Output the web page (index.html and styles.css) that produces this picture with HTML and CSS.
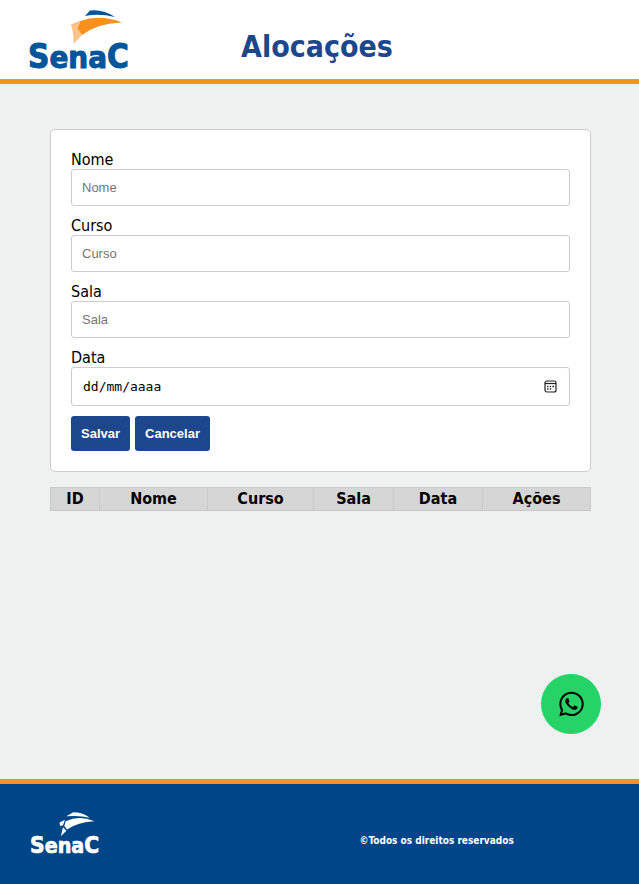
FILE: index.html
```html
<!DOCTYPE html>
<html lang="pt-BR">
<head>
<meta charset="utf-8">
<meta name="viewport" content="width=device-width, initial-scale=1">
<title>Alocações</title>
<link rel="stylesheet" href="styles.css">
</head>
<body>
<header class="header">
  <a class="brand" href="#" aria-label="Senac">
    <svg class="logo" viewBox="0 0 102 62">
      <path class="logo-top" d="M57 7 62 1.500Q75 0 87 8Q71 4 57 7Z"/>
      <path class="logo-wing" d="M52.500 12Q72 5 94 13.500Q70 14 54 26L49 19.500Z"/>
      <path class="logo-fold" d="M43 15.500 52.500 11.500 49.500 19.500 54 26 45.500 35Q46 25 43 15.500Z"/>
      <text class="logo-text" x="0" y="59"><tspan class="cap">S</tspan><tspan>ena</tspan><tspan class="cap">C</tspan></text>
    </svg>
  </a>
  <h1 class="title">Alocações</h1>
</header>
<main class="main">
  <form class="card">
    <label for="nome">Nome</label>
    <input class="field" id="nome" type="text" placeholder="Nome">
    <label for="curso">Curso</label>
    <input class="field" id="curso" type="text" placeholder="Curso">
    <label for="sala">Sala</label>
    <input class="field" id="sala" type="text" placeholder="Sala">
    <label for="data">Data</label>
    <div class="field date">
      <input class="date-input" id="data" type="text" inputmode="numeric" placeholder="dd/mm/aaaa">
      <button class="picker" type="button" aria-label="Abrir calendário">
        <svg viewBox="0 0 13 13"><rect x="1" y="1" width="11" height="11" rx="2" fill="none" stroke="#222" stroke-width="1.2"/><path d="M1 3.500H12" stroke="#222" stroke-width="1.2"/><path d="M3.200 6.500h1.300M5.800 6.500h1.300M8.400 6.500h1.600M3.200 9h1.300M5.800 9h1.300" stroke="#222" stroke-width="1.4"/></svg>
      </button>
    </div>
    <div class="actions">
      <button class="btn" type="button">Salvar</button>
      <button class="btn" type="button">Cancelar</button>
    </div>
  </form>
  <table class="table">
    <colgroup><col class="c-id"><col class="c-nome"><col class="c-curso"><col class="c-sala"><col class="c-data"><col class="c-acoes"></colgroup>
    <thead><tr><th>ID</th><th>Nome</th><th>Curso</th><th>Sala</th><th>Data</th><th>Ações</th></tr></thead>
  </table>
</main>
<footer class="footer">
  <a class="brand" href="#" aria-label="Senac">
    <svg class="logo logo-light" viewBox="0 0 102 62">
      <path class="logo-top" d="M53 6 63 0Q76 0 87 8Q71 4 53 6Z"/>
      <path class="logo-wing" d="M52 13Q72 4 94 13Q70 14 54 25L50 20Z"/>
      <path class="logo-fold" d="M43 15 51 11 48 19 44 20ZM48 22 53 27 45 35Z"/>
      <text class="logo-text" x="0" y="59"><tspan class="cap">S</tspan><tspan>ena</tspan><tspan class="cap">C</tspan></text>
    </svg>
  </a>
  <p class="rights">©Todos os direitos reservados</p>
</footer>
<a class="whatsapp" href="#" aria-label="WhatsApp">
  <svg viewBox="0 0 448 512"><path d="M380.9 97.1C339 55.1 283.2 32 223.9 32c-122.4 0-222 99.6-222 222 0 39.1 10.2 77.3 29.6 111L0 480l117.7-30.9c32.4 17.7 68.9 27 106.1 27h.1c122.3 0 224.1-99.6 224.1-222 0-59.3-25.2-115-67.1-157zm-157 341.600c-33.200 0-65.700-8.900-94-25.700l-6.700-4-69.800 18.300L72 359.200l-4.400-7c-18.500-29.400-28.200-63.300-28.200-98.200 0-101.700 82.800-184.500 184.600-184.500 49.300 0 95.600 19.200 130.400 54.100 34.800 34.900 56.200 81.200 56.100 130.500 0 101.800-84.900 184.600-186.600 184.600zm101.200-138.200c-5.500-2.800-32.800-16.200-37.900-18-5.100-1.900-8.800-2.800-12.500 2.800-3.700 5.600-14.300 18-17.600 21.800-3.200 3.700-6.500 4.200-12 1.400-32.600-16.300-54-29.100-75.500-66-5.700-9.800 5.700-9.100 16.300-30.300 1.800-3.700.9-6.900-.5-9.700-1.400-2.800-12.500-30.100-17.100-41.200-4.500-10.800-9.100-9.300-12.500-9.500-3.200-.2-6.900-.2-10.600-.2-3.700 0-9.700 1.400-14.800 6.900-5.100 5.600-19.400 19-19.400 46.300 0 27.300 19.900 53.700 22.600 57.400 2.800 3.700 39.100 59.700 94.800 83.800 35.200 15.200 49 16.500 66.600 13.900 10.700-1.600 32.800-13.400 37.400-26.400 4.600-13 4.600-24.100 3.200-26.400-1.300-2.500-5-3.900-10.500-6.600z"/></svg>
</a>
</body>
</html>
```

FILE: styles.css
```css
* { box-sizing: border-box; }
body {
  margin: 0;
  min-height: 100vh;
  display: flex;
  flex-direction: column;
  background: #eff1f1;
  color: #000;
  font: 16px/20px Tahoma, "DejaVu Sans Condensed", "Noto Sans", sans-serif;
}
.header {
  display: flex;
  align-items: center;
  padding: 9px 28px 8px;
  background: #fff;
  border-bottom: 5px solid #f7941d;
}
.brand { display: block; }
.logo { display: block; width: 102px; height: 62px; overflow: visible; }
.logo-top { fill: #00559b; }
.logo-wing { fill: #f7901e; }
.logo-fold { fill: #fbc38a; }
.logo-text {
  font: bold 31px "DejaVu Sans Condensed", "DejaVu Sans", sans-serif;
  fill: #00559b;
  stroke: #00559b;
  stroke-width: 1px;
}
.logo-text .cap { font-size: 33px; }
.title {
  margin: 14px 0 0 111px;
  color: #1c478c;
  font-size: 30px;
  line-height: 36px;
}
.main { flex: 1; padding: 45px 48px 45px 50px; }
.card {
  padding: 20px;
  background: #fff;
  border: 1px solid #ccc;
  border-radius: 5px;
}
.card label { display: block; height: 19px; line-height: 20px; }
.field {
  display: block;
  width: 100%;
  height: 37px;
  margin-bottom: 10px;
  padding: 10px;
  background: #fff;
  border: 1px solid #ccc;
  border-radius: 3px;
  font: 13px "Liberation Sans", Arial, sans-serif;
}
.field::placeholder { color: #757575; }
.date {
  display: flex;
  align-items: center;
  justify-content: space-between;
  height: 39px;
  padding: 0 12px 0 11px;
}
.date-input {
  flex: 1;
  min-width: 0;
  padding: 0;
  border: 0;
  background: none;
  font: 13px "DejaVu Sans Mono", monospace;
}
.date-input::placeholder { color: #000; }
.picker { padding: 0; border: 0; background: none; }
.picker svg { display: block; width: 13px; height: 13px; }
.actions { display: flex; gap: 5px; }
.btn {
  height: 35px;
  padding: 0 10px;
  border: 0;
  border-radius: 3px;
  background: #1c478c;
  color: #fff;
  font: bold 13px "Liberation Sans", Arial, sans-serif;
}
.table {
  width: 100%;
  margin-top: 15px;
  border-collapse: collapse;
  table-layout: fixed;
}
.c-id { width: 49px; }
.c-nome { width: 20%; }
.c-curso { width: 106px; }
.c-sala { width: 80px; }
.c-data { width: 89px; }
.c-acoes { width: 20%; }
.table th {
  padding: 1px;
  border: 1px solid #c8caca;
  background: #d6d6d6;
}
.footer {
  display: grid;
  grid-template-columns: 1fr 1fr;
  align-items: center;
  height: 105px;
  padding: 0 30px;
  background: #004587;
  border-top: 5px solid #f7941d;
  color: #fff;
}
.logo-light { width: 70px; height: 43px; margin-top: -2px; }
.logo-light * { fill: #fff; stroke: #fff; }
.logo-light path { stroke: none; }
.rights {
  margin: 14px 0 0 40px;
  font-size: 10px;
  line-height: 12px;
  font-weight: bold;
}
.whatsapp {
  position: fixed;
  right: 38px;
  bottom: 150px;
  display: grid;
  place-items: center;
  width: 60px;
  height: 60px;
  border-radius: 50%;
  background: #25d366;
}
.whatsapp svg { width: 25px; height: 28px; }
```
